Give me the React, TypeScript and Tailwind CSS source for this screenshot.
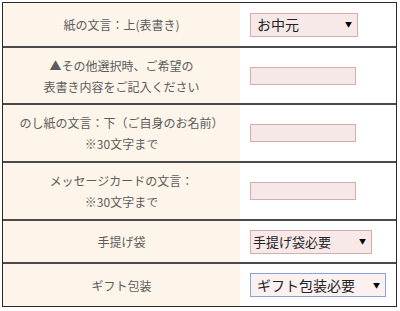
import React from "react";

const font = { fontFamily: '"Noto Sans CJK JP", "Noto Sans", sans-serif' };

const Label = ({ lines }: { lines: string[] }) => (
  <div className="w-[237px] h-full bg-[#fdf5ea] flex flex-col items-center justify-center text-[12px] leading-[21px] text-[#5c5c5c]">
    {lines.map((l) => (
      <p key={l}>{l}</p>
    ))}
  </div>
);

const TextBox = () => (
  <div className="w-[106px] h-[18px] bg-[#f7e8e8] border border-[#d6adad]" />
);

const Select = ({
  value,
  w,
  blue,
  small,
}: {
  value: string;
  w: string;
  blue?: boolean;
  small?: boolean;
}) => (
  <div
    className={`${w} h-[24px] flex items-center justify-between border ${
      blue ? "border-[#89a3d6] bg-[#fbf1f1]" : "border-[#d6adad] bg-[#f8e9e9]"
    } ${small ? "pl-[2px] text-[13px]" : "pl-[6px] text-[14px]"} pr-[5px] text-[#222]`}
  >
    <span>{value}</span>
    <span className="text-[7px] text-black">▼</span>
  </div>
);

const Row = ({
  h,
  first,
  lines,
  children,
}: {
  h: string;
  first?: boolean;
  lines: string[];
  children: React.ReactNode;
}) => (
  <div className={`flex ${h} ${first ? "" : "border-t-2 border-t-[#4a4a4a]"}`}>
    <Label lines={lines} />
    <div className="flex-1 bg-white flex items-center pl-[10px]">{children}</div>
  </div>
);

export default function App() {
  return (
    <div className="w-[400px] h-[311px] bg-white pt-[2px] pl-[2px]" style={font}>
      <div className="w-[395px] border border-[#2a2a2a]">
        <Row first h="h-[43px]" lines={["紙の文言：上(表書き)"]}>
          <Select value="お中元" w="w-[108px]" />
        </Row>
        <Row h="h-[57px]" lines={["▲その他選択時、ご希望の", "表書き内容をご記入ください"]}>
          <TextBox />
        </Row>
        <Row h="h-[58px]" lines={["のし紙の文言：下（ご自身のお名前）", "※30文字まで"]}>
          <TextBox />
        </Row>
        <Row h="h-[58px]" lines={["メッセージカードの文言：", "※30文字まで"]}>
          <TextBox />
        </Row>
        <Row h="h-[43px]" lines={["手提げ袋"]}>
          <Select value="手提げ袋必要" w="w-[122px]" small />
        </Row>
        <Row h="h-[44px]" lines={["ギフト包装"]}>
          <Select value="ギフト包装必要" w="w-[136px]" blue />
        </Row>
      </div>
    </div>
  );
}
